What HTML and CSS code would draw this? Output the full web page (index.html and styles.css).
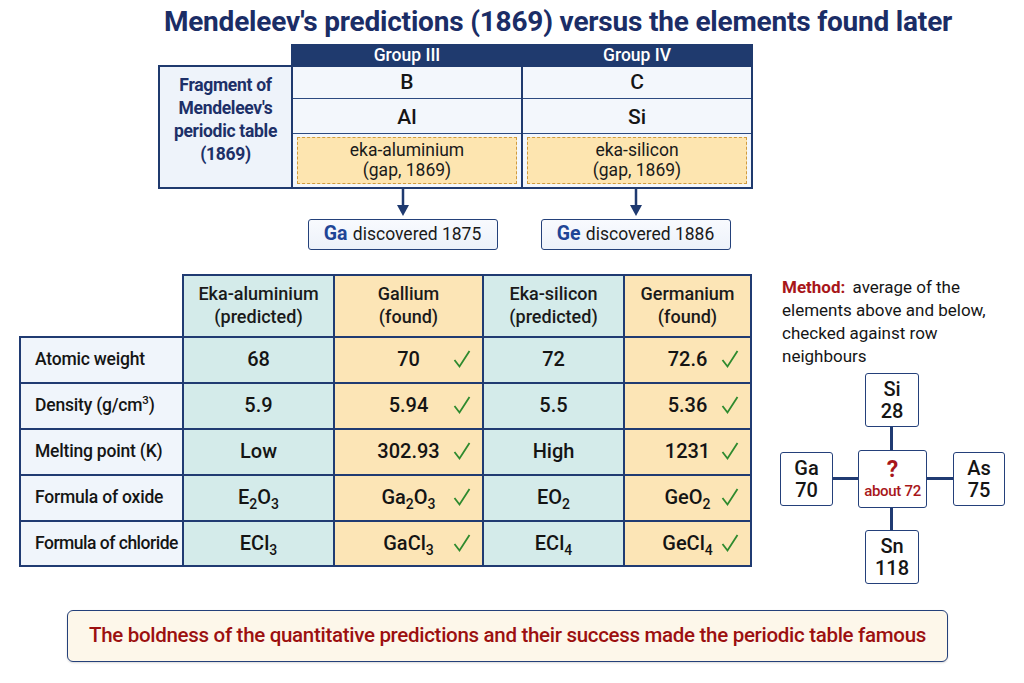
FILE: index.html
```html
<!DOCTYPE html>
<html lang="en">
<head>
<meta charset="utf-8">
<title>Mendeleev's predictions</title>
<link rel="stylesheet" href="styles.css">
</head>
<body>
<h1 class="title">Mendeleev's predictions (1869) versus the elements found later</h1>

<section class="fragment">
  <table class="frag">
    <tr class="frag-head">
      <td class="blank"></td>
      <th class="g3">Group III</th>
      <th>Group IV</th>
    </tr>
    <tr class="r-b">
      <td class="frag-label" rowspan="3">Fragment of<br>Mendeleev's<br>periodic table<br>(1869)</td>
      <td class="el">B</td>
      <td class="el">C</td>
    </tr>
    <tr class="r-al">
      <td class="el">Al</td>
      <td class="el">Si</td>
    </tr>
    <tr class="r-gap">
      <td class="gapcell"><div class="gapbox">eka-aluminium<br>(gap, 1869)</div></td>
      <td class="gapcell"><div class="gapbox">eka-silicon<br>(gap, 1869)</div></td>
    </tr>
  </table>
  <div class="found-row">
    <div class="found-item">
      <svg class="arrow" width="14" height="28" viewBox="0 0 14 28"><line x1="7" y1="0" x2="7" y2="18" stroke="#1f3a70" stroke-width="2.5"/><polygon points="1,16 13,16 7,27" fill="#1f3a70"/></svg>
      <div class="disc"><b>Ga</b> discovered 1875</div>
    </div>
    <div class="found-item">
      <svg class="arrow" width="14" height="28" viewBox="0 0 14 28"><line x1="7" y1="0" x2="7" y2="18" stroke="#1f3a70" stroke-width="2.5"/><polygon points="1,16 13,16 7,27" fill="#1f3a70"/></svg>
      <div class="disc"><b>Ge</b> discovered 1886</div>
    </div>
  </div>
</section>

<section class="main">
  <table class="cmp">
    <colgroup>
      <col class="c0"><col class="c1"><col class="c2"><col class="c3"><col class="c4">
    </colgroup>
    <tr class="head">
      <td class="blank"></td>
      <th class="pred">Eka-aluminium<br>(predicted)</th>
      <th class="fnd">Gallium<br>(found)</th>
      <th class="pred">Eka-silicon<br>(predicted)</th>
      <th class="fnd">Germanium<br>(found)</th>
    </tr>
    <tr>
      <td class="lab">Atomic weight</td>
      <td class="pred val">68</td>
      <td class="fnd val"><div class="fv"><span class="v">70</span><svg class="ok" width="18" height="20" viewBox="0 0 18 20"><path d="M1.5 11 L6.5 17.5 L16.5 2" fill="none" stroke="#2e8a2e" stroke-width="1.8"/></svg></div></td>
      <td class="pred val">72</td>
      <td class="fnd val"><div class="fv"><span class="v">72.6</span><svg class="ok" width="18" height="20" viewBox="0 0 18 20"><path d="M1.5 11 L6.5 17.5 L16.5 2" fill="none" stroke="#2e8a2e" stroke-width="1.8"/></svg></div></td>
    </tr>
    <tr>
      <td class="lab">Density (g/cm<sup>3</sup>)</td>
      <td class="pred val">5.9</td>
      <td class="fnd val"><div class="fv"><span class="v">5.94</span><svg class="ok" width="18" height="20" viewBox="0 0 18 20"><path d="M1.5 11 L6.5 17.5 L16.5 2" fill="none" stroke="#2e8a2e" stroke-width="1.8"/></svg></div></td>
      <td class="pred val">5.5</td>
      <td class="fnd val"><div class="fv"><span class="v">5.36</span><svg class="ok" width="18" height="20" viewBox="0 0 18 20"><path d="M1.5 11 L6.5 17.5 L16.5 2" fill="none" stroke="#2e8a2e" stroke-width="1.8"/></svg></div></td>
    </tr>
    <tr>
      <td class="lab">Melting point (K)</td>
      <td class="pred val">Low</td>
      <td class="fnd val"><div class="fv"><span class="v">302.93</span><svg class="ok" width="18" height="20" viewBox="0 0 18 20"><path d="M1.5 11 L6.5 17.5 L16.5 2" fill="none" stroke="#2e8a2e" stroke-width="1.8"/></svg></div></td>
      <td class="pred val">High</td>
      <td class="fnd val"><div class="fv"><span class="v">1231</span><svg class="ok" width="18" height="20" viewBox="0 0 18 20"><path d="M1.5 11 L6.5 17.5 L16.5 2" fill="none" stroke="#2e8a2e" stroke-width="1.8"/></svg></div></td>
    </tr>
    <tr>
      <td class="lab">Formula of oxide</td>
      <td class="pred val">E<sub>2</sub>O<sub>3</sub></td>
      <td class="fnd val"><div class="fv"><span class="v">Ga<sub>2</sub>O<sub>3</sub></span><svg class="ok" width="18" height="20" viewBox="0 0 18 20"><path d="M1.5 11 L6.5 17.5 L16.5 2" fill="none" stroke="#2e8a2e" stroke-width="1.8"/></svg></div></td>
      <td class="pred val">EO<sub>2</sub></td>
      <td class="fnd val"><div class="fv"><span class="v">GeO<sub>2</sub></span><svg class="ok" width="18" height="20" viewBox="0 0 18 20"><path d="M1.5 11 L6.5 17.5 L16.5 2" fill="none" stroke="#2e8a2e" stroke-width="1.8"/></svg></div></td>
    </tr>
    <tr class="last">
      <td class="lab narrow">Formula of chloride</td>
      <td class="pred val">ECl<sub>3</sub></td>
      <td class="fnd val"><div class="fv"><span class="v">GaCl<sub>3</sub></span><svg class="ok" width="18" height="20" viewBox="0 0 18 20"><path d="M1.5 11 L6.5 17.5 L16.5 2" fill="none" stroke="#2e8a2e" stroke-width="1.8"/></svg></div></td>
      <td class="pred val">ECl<sub>4</sub></td>
      <td class="fnd val"><div class="fv"><span class="v">GeCl<sub>4</sub></span><svg class="ok" width="18" height="20" viewBox="0 0 18 20"><path d="M1.5 11 L6.5 17.5 L16.5 2" fill="none" stroke="#2e8a2e" stroke-width="1.8"/></svg></div></td>
    </tr>
  </table>

  <aside class="side">
    <p class="method"><span class="mlabel">Method:</span> average of the elements above and below, checked against row neighbours</p>
    <div class="diagram">
      <div class="box si"><span>Si</span><span>28</span></div>
      <div class="vline v1"></div>
      <div class="box ga"><span>Ga</span><span>70</span></div>
      <div class="hline h1"></div>
      <div class="box center"><span class="q">?</span><span class="about">about 72</span></div>
      <div class="hline h2"></div>
      <div class="box as"><span>As</span><span>75</span></div>
      <div class="vline v2"></div>
      <div class="box sn"><span>Sn</span><span>118</span></div>
    </div>
  </aside>
</section>

<div class="banner">The boldness of the quantitative predictions and their success made the periodic table famous</div>
</body>
</html>
```

FILE: styles.css
```css
* { box-sizing: border-box; }
html, body { margin: 0; padding: 0; }
body {
  width: 1024px;
  height: 683px;
  background: #ffffff;
  font-family: Roboto, "Liberation Sans", sans-serif;
  color: #151515;
  overflow: hidden;
}

.title {
  margin: 0;
  height: 44px;
  line-height: 44px;
  text-align: center;
  font-size: 28px;
  font-weight: 700;
  color: #1b2d66;
  padding-left: 92px;
  letter-spacing: -0.2px;
}

/* ---------- fragment ---------- */
.fragment {
  padding-left: 158px;
}
.frag {
  border-collapse: collapse;
  table-layout: fixed;
  width: 592px;
}
.frag td, .frag th { padding: 0; }
.frag .blank { width: 133px; border: none; }
.frag-head { height: 21px; }
.frag-head th {
  background: #1f3a6e;
  color: #ffffff;
  font-weight: 500;
  font-size: 17.5px;
  width: 230px;
  border: 2px solid #1f3a6e;
  line-height: 17px;
}
.frag-head th.g3 { border-right: 1px solid #9fb2d2; }
.frag .frag-label {
  background: #eef3fa;
  border: 2px solid #1f3a6e;
  color: #1d3068;
  font-weight: 700;
  font-size: 17.5px;
  line-height: 23px;
  text-align: center;
  vertical-align: middle;
  padding-bottom: 14px;
  letter-spacing: -0.3px;
}
.frag .el, .frag .gapcell {
  background: #f3f7fc;
  border-left: 2px solid #1f3a6e;
  border-right: 2px solid #1f3a6e;
  border-bottom: 1.5px solid #2c4a80;
  text-align: center;
  font-weight: 500;
  font-size: 21px;
}
.r-b { height: 32px; }
.r-al { height: 35px; }
.r-al .el { padding-top: 3px; }
.r-gap { height: 54px; }
.frag .gapcell { border-bottom: 2px solid #1f3a6e; padding: 3px 4px; }
.gapbox {
  height: 47px;
  background: #fde5b0;
  border: 1.5px dashed #d19b3e;
  font-size: 17.5px;
  font-weight: 400;
  line-height: 20px;
  padding-top: 2px;
  color: #1a1a1a;
}

.found-row {
  margin-left: 133px;
  width: 459px;
  display: grid;
  grid-template-columns: 230px 229px;
}
.found-item {
  display: flex;
  flex-direction: column;
  align-items: center;
}
.found-item:first-child { padding-right: 7px; }
.arrow { display: block; margin-top: 0; }
.disc {
  margin-top: 2px;
  width: 190px;
  height: 31px;
  border: 1.5px solid #24417a;
  border-radius: 3px;
  background: linear-gradient(#f8fafe, #edf2fa);
  text-align: center;
  line-height: 28px;
  font-size: 17.5px;
  color: #1a1a1a;
}
.disc b { color: #1f4596; font-size: 19.5px; font-weight: 700; margin-right: 1px; }

/* ---------- main ---------- */
.main {
  display: flex;
  align-items: flex-start;
  margin-top: 24px;
  padding-left: 19px;
}
.cmp {
  border-collapse: collapse;
  table-layout: fixed;
  width: 731px;
}
.cmp td, .cmp th { padding: 0; }
.c0 { width: 163px; }
.c1 { width: 151px; }
.c2 { width: 149px; }
.c3 { width: 141px; }
.c4 { width: 127px; }
.cmp .blank { border: none; background: #fff; }
.cmp .head { height: 62px; }
.cmp .head th {
  font-weight: 500;
  font-size: 18px;
  line-height: 23px;
  color: #1a1a1a;
  border: 2px solid #203b72;
  padding-bottom: 2px;
}
.cmp tr { height: 46px; }
.cmp .last { height: 45px; }
.cmp td {
  border: 2px solid #203b72;
}
.cmp .pred { background: #d4ebea; }
.cmp .fnd { background: #fce5b6; }
.cmp .lab {
  background: #f0f5fb;
  font-size: 17.5px;
  font-weight: 500;
  padding-left: 14px;
  color: #151515;
  white-space: nowrap;
  letter-spacing: -0.2px;
  padding-bottom: 1px;
}
.cmp .lab.narrow { letter-spacing: -0.5px; font-size: 17.5px; }
.cmp .lab sup { font-size: 11.5px; vertical-align: 7px; line-height: 0; }
.cmp .val {
  text-align: center;
  font-size: 20px;
  font-weight: 500;
  color: #141414;
  padding-bottom: 1px;
}
.cmp sub { font-size: 14px; vertical-align: -5px; line-height: 0; }
.fv {
  display: flex;
  align-items: center;
  padding: 0 11px 0 29px;
}
.fv .v { flex: 1; text-align: center; }
.fv .ok { flex: none; display: block; }

/* ---------- side ---------- */
.side {
  margin-left: 28px;
  width: 230px;
}
.method {
  margin: 2px 0 0 2px;
  font-size: 17px;
  line-height: 23px;
  color: #151515;
}
.mlabel { color: #a8161a; font-weight: 700; margin-right: 3px; }
.diagram {
  margin-top: 5px;
  display: grid;
  grid-template-columns: 53px 25px 69px 26px 52px;
  grid-template-rows: 54px 23px 58px 22px 54px;
}
.box {
  border: 1.6px solid #24407a;
  border-radius: 3px;
  background: #fff;
  display: flex;
  flex-direction: column;
  align-items: center;
  justify-content: center;
  font-size: 20px;
  font-weight: 500;
  line-height: 22px;
  color: #151515;
}
.si { grid-column: 3; grid-row: 1; margin: 0 8px 0 7px; }
.v1 { grid-column: 3; grid-row: 2; }
.ga { grid-column: 1; grid-row: 3; margin: 2px 0 2px 0; }
.h1 { grid-column: 2; grid-row: 3; }
.center { grid-column: 3; grid-row: 3; }
.h2 { grid-column: 4; grid-row: 3; }
.as { grid-column: 5; grid-row: 3; margin: 2px 0 2px 0; }
.v2 { grid-column: 3; grid-row: 4; }
.sn { grid-column: 3; grid-row: 5; margin: 0 8px 0 7px; }
.vline {
  width: 3px;
  margin-left: 32px;
  background: #203b72;
}
.hline {
  height: 3px;
  align-self: center;
  background: #203b72;
}
.center .q { color: #a8161a; font-weight: 700; font-size: 23px; line-height: 25px; }
.center .about { color: #a8161a; font-weight: 500; font-size: 15px; line-height: 19px; letter-spacing: -0.3px; }

/* ---------- banner ---------- */
.banner {
  margin: 26px 0 0 67px;
  width: 881px;
  height: 52px;
  border: 1.6px solid #24407a;
  border-radius: 6px;
  background: #fdf7ea;
  box-shadow: 0 1px 2px rgba(0,0,0,0.15);
  color: #9c1010;
  font-size: 20.5px;
  font-weight: 500;
  line-height: 49px;
  text-align: center;
  letter-spacing: -0.3px;
}
```
